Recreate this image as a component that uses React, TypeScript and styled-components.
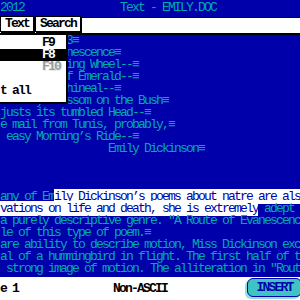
import styled, { createGlobalStyle } from 'styled-components';

const BLUE = '#0000aa';
const TEAL = '#00aaaa';

const GlobalStyle = createGlobalStyle`
  html, body {
    margin: 0;
    padding: 0;
    background: ${BLUE};
  }
`;

const Screen = styled.div`
  position: relative;
  width: 300px;
  height: 300px;
  overflow: hidden;
  background: ${BLUE};
  font-family: 'Liberation Mono', 'DejaVu Sans Mono', monospace;
  font-size: 13px;
  letter-spacing: -1.8px;
`;

const TitleBar = styled.div`
  display: flex;
  height: 17px;
  line-height: 16px;
  color: ${TEAL};
  white-space: pre;
`;

const Clock = styled.span`
  width: 120px;
`;

const MenuBar = styled.div`
  display: flex;
  gap: 1px;
  height: 15px;
  background: #fff;
  border-top: 1px solid #000;
  border-bottom: 2px solid #000;
`;

const Tab = styled.div`
  margin-top: -2px;
  height: 14px;
  padding: 0 4px;
  line-height: 14px;
  font-weight: 700;
  color: #000;
  background: #fff;
  border: 1px solid #000;
  box-shadow: 1px 1px 0 #000;
  white-space: pre;
`;

const Doc = styled.div`
  height: 242px;
  overflow: hidden;
  color: ${TEAL};
`;

const Line = styled.div`
  height: 12px;
  line-height: 12px;
  white-space: pre;
`;

const Sel = styled.span`
  background: #fff;
  color: ${BLUE};
`;

const Dropdown = styled.div`
  position: absolute;
  top: 35px;
  left: 0;
  width: 66px;
  padding: 2px 0 5px;
  background: #fff;
  border-right: 2px solid #000;
  border-bottom: 2px solid #000;
`;

const MenuItem = styled.div<{ $active?: boolean; $disabled?: boolean }>`
  display: flex;
  height: 12px;
  line-height: 12px;
  font-weight: 700;
  white-space: pre;
  background: ${(p) => (p.$active ? '#000' : 'transparent')};
  color: ${(p) => (p.$active ? '#fff' : p.$disabled ? '#9a9a9a' : '#000')};
  text-shadow: ${(p) => (p.$disabled ? '1px 1px 0 #e8e8e8' : 'none')};
`;

const ItemLabel = styled.span`
  width: 42px;
`;

const StatusBar = styled.div`
  display: flex;
  align-items: center;
  height: 23px;
  background: #fff;
  color: #000;
  font-weight: 700;
  white-space: pre;
`;

const StatusCell = styled.span<{ $width?: number }>`
  width: ${(p) => (p.$width ? `${p.$width}px` : 'auto')};
  flex: ${(p) => (p.$width ? 'none' : '1')};
`;

const InsertBadge = styled.span`
  width: 53px;
  height: 17px;
  margin: -2px -2px 0 0;
  line-height: 17px;
  text-align: center;
  color: ${BLUE};
  background: #3fc4c4;
  border: 1px solid ${BLUE};
  border-radius: 6px;
  box-shadow: -2px 2px 0 #8fe0e0;
`;

const poem: string[] = [
  '  Poem #1463\u2261',
  'oute of Evanescence\u2261',
  'th a revolving Wheel--\u2261',
  'Resonance of Emerald--\u2261',
  'Rush of Cochineal--\u2261',
  'd every Blossom on the Bush\u2261',
  'justs its tumbled Head--\u2261',
  'e mail from Tunis, probably,\u2261',
  ' easy Morning\u2019s Ride--\u2261',
  '                  Emily Dickinson\u2261',
  '',
  '',
  '',
];

const essay: string[] = [
  'a purely descriptive genre. "A Route of Evanescence" is',
  'le of this type of poem.\u2261',
  'are ability to describe motion, Miss Dickinson excels',
  'al of a hummingbird in flight. The first half of the',
  ' strong image of motion. The alliteration in "Route',
];

const App: React.FC = () => {
  return (
    <>
      <GlobalStyle />
      <Screen>
        <TitleBar>
          <Clock>2012</Clock>
          <span>Text - EMILY.DOC</span>
        </TitleBar>

        <MenuBar>
          <Tab>Text</Tab>
          <Tab>Search</Tab>
        </MenuBar>

        <Doc>
          {poem.map((text, i) => (
            <Line key={i}>{text}</Line>
          ))}
          <Line>
            any of Em<Sel>ily Dickinson’s poems about natre are also</Sel>
          </Line>
          <Line>
            <Sel>vations on life and death, she is extremely</Sel> adept at
          </Line>
          {essay.map((text, i) => (
            <Line key={`e${i}`}>{text}</Line>
          ))}
        </Doc>

        <StatusBar>
          <StatusCell $width={113}>e 1</StatusCell>
          <StatusCell>Non-ASCII</StatusCell>
          <InsertBadge>INSERT</InsertBadge>
        </StatusBar>

        <Dropdown>
          <MenuItem>
            <ItemLabel />F9
          </MenuItem>
          <MenuItem $active>
            <ItemLabel />F8
          </MenuItem>
          <MenuItem $disabled>
            <ItemLabel />F10
          </MenuItem>
          <MenuItem />
          <MenuItem>
            <ItemLabel>t all</ItemLabel>
          </MenuItem>
        </Dropdown>
      </Screen>
    </>
  );
};

export default App;
